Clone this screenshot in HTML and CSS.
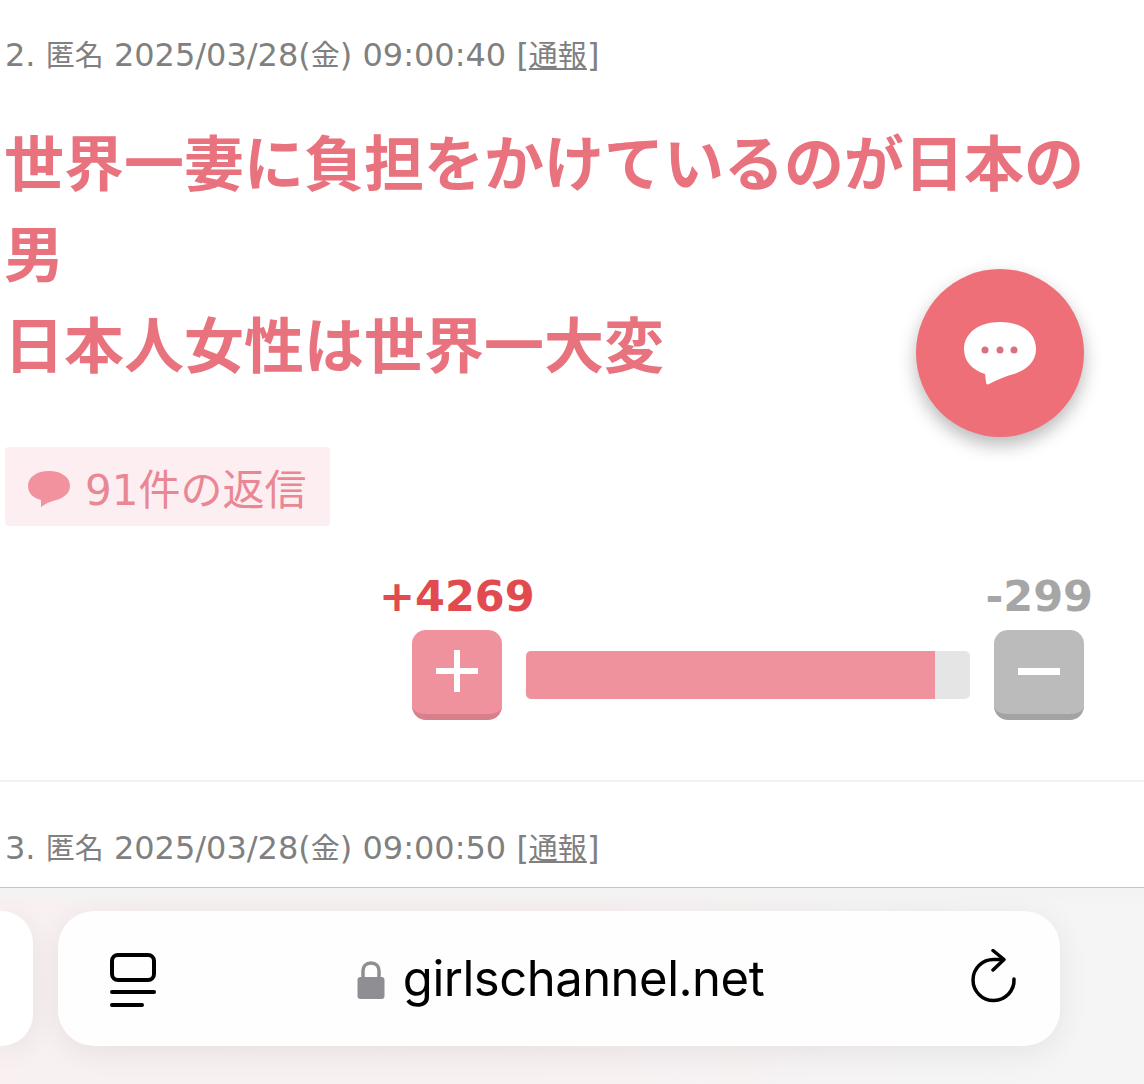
FILE: index.html
```html
<!DOCTYPE html>
<html lang="ja">
<head>
    <meta charset="UTF-8">
    <meta name="viewport" content="width=device-width, initial-scale=1.0">
    <title>girlschannel.net</title>
    <link rel="stylesheet" href="styles.css">
</head>
<body>
    <div class="page">
        <div class="comment">
            <p class="meta">2. <span class="ja">匿名</span> 2025/03/28(<span class="ja">金</span>) 09:00:40 [<a class="report ja" href="#">通報</a>]</p>
            <h2 class="body-text">世界一妻に負担をかけているのが日本の男<br>日本人女性は世界一大変</h2>
            <a class="reply" href="#">
                <svg class="reply-icon" viewBox="0 0 42 36" width="42" height="36">
                    <path d="M21 0C33 0 42 6 42 15C42 23 34 28 25 30C21 31 17 33 13 36L13 29C5 27 0 22 0 15C0 6 9 0 21 0Z" fill="#f1929e"/>
                </svg>
                91件の返信
            </a>
            <div class="vote">
                <div class="vote-counts">
                    <span class="count-plus">+4269</span>
                    <span class="count-minus">-299</span>
                </div>
                <div class="vote-row">
                    <button class="vote-btn plus">
                        <svg viewBox="0 0 42 42" width="42" height="42"><path d="M21 0V42M0 21H42" stroke="#fff" stroke-width="6"/></svg>
                    </button>
                    <div class="bar"><div class="bar-fill" style="width: 92.1%"></div></div>
                    <button class="vote-btn minus">
                        <svg viewBox="0 0 42 7" width="42" height="7"><path d="M0 3.500H42" stroke="#fff" stroke-width="7"/></svg>
                    </button>
                </div>
            </div>
        </div>
        <div class="comment">
            <p class="meta">3. <span class="ja">匿名</span> 2025/03/28(<span class="ja">金</span>) 09:00:50 [<a class="report ja" href="#">通報</a>]</p>
        </div>

        <button class="fab">
            <svg viewBox="0 0 72 63" width="72" height="63">
                <path d="M36 0C58 0 72 11 72 27C72 40 62 48 50 52C42 54 33 58 25 62C23 63 22 62 22 60L21 52C8 48 0 39 0 27C0 11 15 0 36 0Z" fill="#fff"/>
                <circle cx="21" cy="28" r="3.500" fill="#d9707f"/>
                <circle cx="36" cy="28" r="3.500" fill="#d9707f"/>
                <circle cx="50" cy="28" r="3.500" fill="#d9707f"/>
            </svg>
        </button>

        <div class="browser-bar">
            <div class="tab-prev"></div>
            <div class="address">
                <svg class="tabs-icon" viewBox="0 0 46 54" width="46" height="54">
                    <rect x="2" y="2" width="42" height="25" rx="6" fill="none" stroke="#000" stroke-width="4"/>
                    <path d="M2 39H44" stroke="#000" stroke-width="4" stroke-linecap="round"/>
                    <path d="M2 52H32" stroke="#000" stroke-width="4" stroke-linecap="round"/>
                </svg>
                <div class="url">
                    <svg viewBox="0 0 28 38" width="28" height="38">
                        <path d="M6 18V10C6 5 9 2 14 2C19 2 22 5 22 10V18" fill="none" stroke="#8e8e93" stroke-width="3.500"/>
                        <rect x="0.500" y="16" width="27" height="22" rx="3" fill="#8e8e93"/>
                    </svg>
                    <span>girlschannel.net</span>
                </div>
                <svg class="reload-icon" viewBox="0 0 46 54" width="46" height="54">
                    <path d="M43 30A20.500 20.500 0 1 1 23 10.500H32" fill="none" stroke="#000" stroke-width="3.500" stroke-linecap="round"/>
                    <path d="M22 1.500L33 10.500L22 21" fill="none" stroke="#000" stroke-width="3.500" stroke-linecap="round" stroke-linejoin="round"/>
                </svg>
            </div>
        </div>
    </div>
</body>
</html>
```
FILE: styles.css
```css
html, body {
    margin: 0;
    padding: 0;
    background: #fff;
}
.page {
    position: relative;
    width: 1144px;
    height: 1084px;
    overflow: hidden;
    font-family: "DejaVu Sans", "Noto Sans CJK JP", sans-serif;
}
.comment {
    padding: 33px 60px 0 5px;
}
.comment + .comment {
    border-top: 2px solid #f1f1f1;
    padding-top: 44px;
}
.meta {
    margin: 0;
    font-size: 32px;
    line-height: 44px;
    color: #808080;
    white-space: nowrap;
}
.ja {
    font-size: 29px;
}
.report {
    color: #808080;
    text-decoration: underline;
}
.body-text {
    margin: 36px -40px 0 -1px;
    font-family: "Noto Sans CJK JP", sans-serif;
    font-size: 60px;
    line-height: 91px;
    font-weight: 700;
    color: #e8727e;
}
.reply {
    display: inline-flex;
    align-items: center;
    gap: 15px;
    margin-top: 60px;
    height: 79px;
    padding: 0 24px 0 23px;
    border-radius: 4px;
    background: #fceef1;
    font-size: 42px;
    color: #e98894;
    text-decoration: none;
}
.reply-icon {
    margin-top: 4px;
}
.vote {
    margin-top: 36px;
    padding-bottom: 60px;
    display: flex;
    flex-direction: column;
    align-items: flex-end;
}
.vote-counts {
    width: 714px;
    margin-right: -9px;
    display: flex;
    justify-content: space-between;
    font-size: 43px;
    font-weight: 700;
    line-height: 68px;
}
.count-plus {
    color: #e14b4f;
}
.count-minus {
    color: #a6a6a6;
}
.vote-row {
    display: flex;
    align-items: flex-start;
    gap: 24px;
}
.vote-btn {
    width: 90px;
    height: 90px;
    padding: 0 0 2px;
    border: none;
    border-radius: 14px;
    display: flex;
    align-items: center;
    justify-content: center;
}
.plus {
    background: #f0929e;
    border-bottom: 6px solid #d77f8b;
}
.minus {
    background: #bbb;
    border-bottom: 6px solid #a3a3a3;
}
.bar {
    width: 444px;
    height: 48px;
    margin-top: 21px;
    border-radius: 5px;
    overflow: hidden;
    background: #e5e5e5;
}
.bar-fill {
    height: 100%;
    background: #f0929e;
}
.fab {
    position: absolute;
    left: 916px;
    top: 269px;
    width: 168px;
    height: 168px;
    padding: 0;
    border: none;
    border-radius: 50%;
    background: #ee6f78;
    box-shadow: 0 8px 18px rgba(0, 0, 0, 0.28);
    display: flex;
    align-items: center;
    justify-content: center;
}
.browser-bar {
    position: absolute;
    left: 0;
    right: 0;
    top: 887px;
    height: 197px;
    box-sizing: border-box;
    border-top: 1px solid #c6c6c6;
    padding-top: 23px;
    display: flex;
    gap: 25px;
    background:
        linear-gradient(180deg, #f3f3f3 0, rgba(243, 243, 243, 0) 18px),
        linear-gradient(90deg, #f8f0f1 0%, #f7f1f2 55%, #f5f4f4 80%, #f5f5f5 100%);
}
.tab-prev {
    width: 33px;
    height: 135px;
    flex-shrink: 0;
    border-radius: 0 32px 32px 0;
    background: #fff;
    box-shadow: 0 6px 30px rgba(0, 0, 0, 0.07);
}
.address {
    width: 1002px;
    height: 135px;
    flex-shrink: 0;
    box-sizing: border-box;
    padding: 0 43px 0 52px;
    border-radius: 36px;
    background: #fefefe;
    box-shadow: 0 6px 30px rgba(0, 0, 0, 0.07);
    display: flex;
    align-items: center;
    justify-content: space-between;
}
.tabs-icon {
    margin-top: 2px;
}
.url {
    display: flex;
    align-items: center;
    gap: 18px;
    margin-right: 6px;
    font-family: Inter, "Liberation Sans", sans-serif;
    font-size: 49px;
    letter-spacing: -0.5px;
    color: #000;
}
.url svg {
    margin-top: 2px;
}
.reload-icon {
    margin-top: -6px;
}
```
